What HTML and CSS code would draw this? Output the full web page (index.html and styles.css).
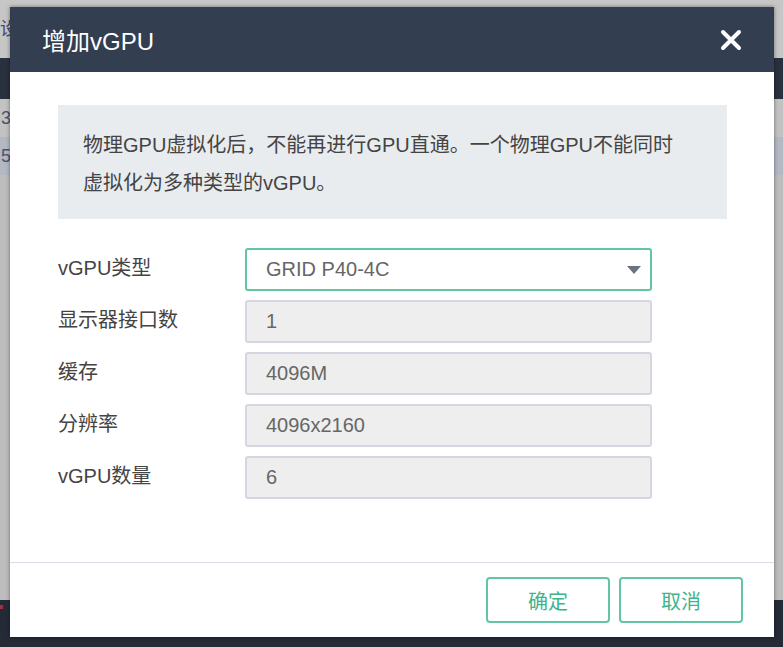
FILE: index.html
```html
<!DOCTYPE html>
<html lang="zh-CN">
<head>
    <meta charset="UTF-8">
    <meta name="viewport" content="width=device-width, initial-scale=1.0">
    <title>增加vGPU</title>
    <link rel="stylesheet" href="styles.css">
</head>
<body>
    <div class="page">
        <div class="page-top"><span class="crumb">设置</span></div>
        <div class="page-nav"></div>
        <div class="page-row">3</div>
        <div class="page-row active">5</div>
        <div class="page-fill"></div>
        <div class="page-bottom"><span class="dot"></span></div>
    </div>

    <div class="modal">
        <div class="modal-header">
            <h2>增加vGPU</h2>
            <span class="close">
                <svg width="22" height="22" viewBox="0 0 22 22">
                    <path d="M3 3 L19 19 M19 3 L3 19" stroke="#fff" stroke-width="4" stroke-linecap="round"/>
                </svg>
            </span>
        </div>
        <div class="modal-body">
            <div class="notice">物理GPU虚拟化后，不能再进行GPU直通。一个物理GPU不能同时虚拟化为多种类型的vGPU。</div>
            <div class="form">
                <label>vGPU类型</label>
                <div class="select">GRID P40-4C<span class="caret"></span></div>
                <label>显示器接口数</label>
                <div class="field">1</div>
                <label>缓存</label>
                <div class="field">4096M</div>
                <label>分辨率</label>
                <div class="field">4096x2160</div>
                <label>vGPU数量</label>
                <div class="field">6</div>
            </div>
        </div>
        <div class="modal-footer">
            <button class="btn">确定</button>
            <button class="btn">取消</button>
        </div>
    </div>
</body>
</html>
```

FILE: styles.css
```css
body {
    margin: 0;
    font-family: "Liberation Sans", "Noto Sans CJK SC", sans-serif;
    background-color: #bdbdbd;
}
.page {
    display: flex;
    flex-direction: column;
    height: 647px;
    overflow: hidden;
}
.page-top {
    height: 58px;
    background-color: #c6c6c6;
    line-height: 58px;
    font-size: 18px;
    color: #3a4a78;
}
.crumb {
    margin-left: 0;
}
.page-nav {
    height: 41px;
    background-color: #29313e;
}
.page-row {
    height: 38px;
    line-height: 38px;
    padding-left: 1px;
    font-size: 18px;
    color: #4a5470;
    background-color: #c2c2c2;
}
.page-row.active {
    background-color: #b3b8c3;
}
.page-fill {
    flex: 1;
    background-color: #bdbdbd;
}
.page-bottom {
    height: 47px;
    background-color: #242b37;
    position: relative;
}
.dot {
    position: absolute;
    left: 0;
    top: 5px;
    width: 3px;
    height: 4px;
    background-color: #a03040;
}

.modal {
    position: absolute;
    left: 10px;
    top: 7px;
    width: 764px;
    height: 630px;
    background-color: #fff;
    box-shadow: 0 0 4px rgba(0, 0, 0, 0.45);
    display: flex;
    flex-direction: column;
}
.modal-header {
    height: 65px;
    flex-shrink: 0;
    background-color: #333e50;
    display: flex;
    align-items: center;
    justify-content: space-between;
    padding: 0 32px;
}
.modal-header h2 {
    margin: 0;
    font-size: 24px;
    font-weight: normal;
    color: #fff;
}
.close {
    display: flex;
    cursor: pointer;
}
.modal-body {
    flex: 1;
    padding: 33px 47px 0 48px;
}
.notice {
    background-color: #e9ecef;
    padding: 21px 40px 17px 25px;
    font-size: 20px;
    line-height: 38px;
    color: #444;
}
.form {
    margin-top: 29px;
    display: grid;
    grid-template-columns: 187px 407px;
    grid-auto-rows: 43px;
    row-gap: 9px;
}
.form label {
    font-size: 20px;
    color: #444;
    line-height: 40px;
}
.field,
.select {
    box-sizing: border-box;
    border: 2px solid #d6d6e2;
    border-radius: 3px;
    background-color: #eeeeee;
    padding-left: 19px;
    font-size: 20px;
    line-height: 39px;
    color: #666;
}
.select {
    position: relative;
    background-color: #fff;
    border-color: #5fc7a2;
}
.caret {
    position: absolute;
    right: 9px;
    top: 16px;
    width: 0;
    height: 0;
    border-left: 7px solid transparent;
    border-right: 7px solid transparent;
    border-top: 8px solid #6b7380;
}
.modal-footer {
    height: 60px;
    flex-shrink: 0;
    border-top: 1px solid #dcdce6;
    display: flex;
    justify-content: flex-end;
    align-items: flex-start;
    gap: 9px;
    padding: 14px 31px 0 0;
}
.btn {
    width: 124px;
    height: 46px;
    background-color: #fff;
    border: 2px solid #62c6a3;
    border-radius: 4px;
    font-family: inherit;
    font-size: 20px;
    color: #3db48b;
    cursor: pointer;
}
```
